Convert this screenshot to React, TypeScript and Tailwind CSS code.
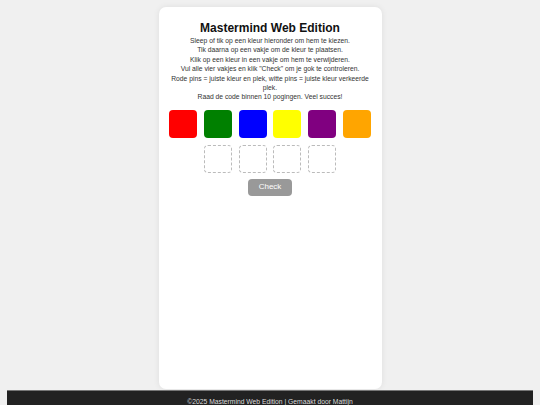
import React from 'react';

const COLORS = ['#ff0000', '#008000', '#0000ff', '#ffff00', '#800080', '#ffa500'];

const INSTRUCTIONS = [
  'Sleep of tik op een kleur hieronder om hem te kiezen.',
  'Tik daarna op een vakje om de kleur te plaatsen.',
  'Klik op een kleur in een vakje om hem te verwijderen.',
  'Vul alle vier vakjes en klik "Check" om je gok te controleren.',
  'Rode pins = juiste kleur en plek, witte pins = juiste kleur verkeerde plek.',
  'Raad de code binnen 10 pogingen. Veel succes!',
];

export default function App() {
  return (
    <div className="min-h-screen bg-[#f0f0f0] px-[7px] pt-[7px] flex flex-col font-['Liberation_Sans',Arial,sans-serif]">
      {/* Game card */}
      <div className="w-[223px] h-[382px] mx-auto bg-white rounded-[7px] shadow-[0_0_6px_rgba(0,0,0,0.08)] px-[11px] pt-[14px] flex flex-col items-center">
        <h1 className="text-[12px] leading-[14px] font-bold text-[#111] text-center">Mastermind Web Edition</h1>

        <div className="mt-[1px] text-[6.75px] leading-[9.4px] text-[#333] text-center">
          {INSTRUCTIONS.map((line) => (
            <p key={line}>{line}</p>
          ))}
        </div>

        {/* Palette */}
        <div className="mt-[8px] flex gap-[6.7px]">
          {COLORS.map((c) => (
            <div key={c} className="w-[28px] h-[28px] rounded-[4px]" style={{ backgroundColor: c }} />
          ))}
        </div>

        {/* Guess slots */}
        <div className="mt-[7px] flex gap-[6.7px]">
          {[0, 1, 2, 3].map((i) => (
            <div key={i} className="w-[28px] h-[28px] rounded-[4px] border border-dashed border-[#bbb]" />
          ))}
        </div>

        <button className="mt-[6px] w-[44px] h-[17px] rounded-[4px] bg-[#999] text-white text-[8px] leading-none">
          Check
        </button>
      </div>

      {/* Footer */}
      <footer className="mt-[1px] bg-[#222] border-t border-[#777] text-[#ddd] text-[6.75px] leading-[9.4px] text-center pt-[6px] pb-[6px]">
        ©2025 Mastermind Web Edition | Gemaakt door Mattijn
      </footer>
    </div>
  );
}
